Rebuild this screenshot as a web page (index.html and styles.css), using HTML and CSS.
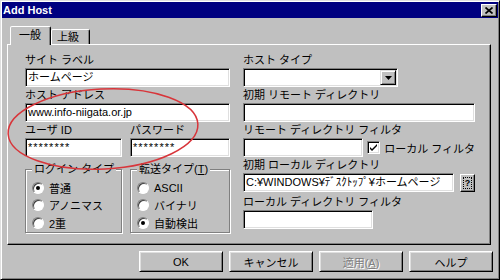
FILE: index.html
```html
<!DOCTYPE html>
<html lang="ja">
<head>
<meta charset="utf-8">
<title>Add Host</title>
<link rel="stylesheet" href="styles.css">
</head>
<body>
<div class="window">
  <div class="titlebar">
    <span class="title">Add Host</span>
    <span class="close"><svg width="8" height="7" viewBox="0 0 8 7"><path d="M0.5 0.5L7.5 6.5M7.5 0.5L0.5 6.5" stroke="#000" stroke-width="1.7" fill="none"/></svg></span>
  </div>
  <div class="tabs">
    <div class="tab active">一般</div>
    <div class="tab">上級</div>
  </div>
  <div class="panel">
    <div class="col left">
      <div class="lbl">サイト ラベル</div>
      <div class="field">ホームページ</div>
      <div class="lbl">ホスト アドレス</div>
      <div class="field">www.info-niigata.or.jp</div>
      <div class="pair">
        <div class="sub">
          <div class="lbl">ユーザ ID</div>
          <div class="field pw">********</div>
        </div>
        <div class="sub">
          <div class="lbl">パスワード</div>
          <div class="field pw">********</div>
        </div>
      </div>
      <div class="pair groups">
        <fieldset class="group">
          <legend>ログイン タイプ</legend>
          <div class="radio"><span class="rb on"></span>普通</div>
          <div class="radio"><span class="rb"></span>アノニマス</div>
          <div class="radio"><span class="rb"></span>2重</div>
        </fieldset>
        <fieldset class="group">
          <legend>転送タイプ(<u>T</u>)</legend>
          <div class="radio"><span class="rb"></span>ASCII</div>
          <div class="radio"><span class="rb"></span>バイナリ</div>
          <div class="radio"><span class="rb on"></span>自動検出</div>
        </fieldset>
      </div>
    </div>
    <div class="col right">
      <div class="lbl">ホスト タイプ</div>
      <div class="select">
        <div class="field sel"></div>
        <span class="drop"><svg width="7" height="4" viewBox="0 0 7 4"><path d="M0 0H7L3.5 4Z" fill="#000"/></svg></span>
      </div>
      <div class="lbl">初期 リモート ディレクトリ</div>
      <div class="field"></div>
      <div class="lbl">リモート ディレクトリ フィルタ</div>
      <div class="row">
        <div class="field w130"></div>
        <span class="check"><svg width="7" height="7" viewBox="0 0 7 7"><path d="M0 3L0 5L2 7L7 2L7 0L2 5Z" fill="#000"/></svg></span>
        <span class="checklbl">ローカル フィルタ</span>
      </div>
      <div class="lbl">初期 ローカル ディレクトリ</div>
      <div class="row">
        <div class="field w211">C:¥WINDOWS¥ﾃﾞｽｸﾄｯﾌﾟ¥ホームページ</div>
        <span class="qbtn"><span class="q">?</span></span>
      </div>
      <div class="lbl last">ローカル ディレクトリ フィルタ</div>
      <div class="field w130"></div>
    </div>
  </div>
  <div class="buttons">
    <button class="btn">OK</button>
    <button class="btn">キャンセル</button>
    <button class="btn disabled">適用(<u>A</u>)</button>
    <button class="btn">ヘルプ</button>
  </div>
  <svg class="annot" width="500" height="280" viewBox="0 0 500 280">
    <ellipse cx="103" cy="129" rx="95" ry="40" transform="rotate(-3 103 129)" fill="none" stroke="#d8353a" stroke-width="1.5"/>
  </svg>
</div>
</body>
</html>
```
FILE: styles.css
```css
* { box-sizing: border-box; }

body {
  margin: 0;
  background: #c0c0c0;
  font-family: "Liberation Sans", "Noto Sans CJK JP", sans-serif;
  font-size: 11px;
  color: #000;
}

.window {
  position: relative;
  width: 500px;
  height: 280px;
  background: #c0c0c0;
  border: 1px solid;
  border-color: #dfdfdf #000 #000 #dfdfdf;
  box-shadow: inset 1px 1px #fff, inset -1px -1px #808080;
  padding: 1px;
  display: flex;
  flex-direction: column;
}

.titlebar {
  height: 16px;
  background: #000080;
  color: #fff;
  display: flex;
  align-items: center;
  justify-content: space-between;
  padding: 0 1px 0 1px;
}

.title {
  font-weight: bold;
  font-size: 11px;
}

.close {
  width: 16px;
  height: 13px;
  background: #c0c0c0;
  border: 1px solid;
  border-color: #fff #000 #000 #fff;
  box-shadow: inset -1px -1px #808080;
  display: flex;
  align-items: center;
  justify-content: center;
}

.tabs {
  display: flex;
  align-items: flex-end;
  height: 18px;
  margin: 8px 0 0 8px;
}

.tab {
  height: 15px;
  padding: 0 6px;
  line-height: 14px;
  font-size: 11px;
  border: 1px solid;
  border-bottom: none;
  border-color: #fff #000 transparent #fff;
  border-radius: 2px 2px 0 0;
  box-shadow: inset -1px 0 #808080;
  background: #c0c0c0;
}

.tab.active {
  position: relative;
  z-index: 1;
  height: 19px;
  margin-bottom: -1px;
  padding: 1px 8px 0;
  line-height: 15px;
  width: 41px;
}

.tab:not(.active) {
  width: 39px;
  padding-left: 5px;
}

.panel {
  margin-left: 5px;
  width: 484px;
  height: 201px;
  border: 1px solid;
  border-color: #fff #000 #000 #fff;
  box-shadow: inset -1px -1px #808080;
  padding: 7px 0 0 17px;
  display: flex;
  gap: 13px;
}

.col {
  display: flex;
  flex-direction: column;
}

.left { width: 205px; }
.right { width: 232px; }

.lbl {
  height: 16px;
  line-height: 16px;
  white-space: nowrap;
}

.lbl.last {
  height: 18px;
  line-height: 20px;
}

.field {
  height: 19px;
  background: #fff;
  border: 1px solid;
  border-color: #808080 #fff #fff #808080;
  box-shadow: inset 1px 1px #000, inset -1px -1px #dfdfdf;
  padding: 0 2px;
  line-height: 17px;
  white-space: nowrap;
  overflow: hidden;
}

.pw { letter-spacing: 1px; }

.pair {
  display: grid;
  grid-template-columns: 97px 100px;
  gap: 8px;
}

.groups { margin-top: 4px; }

.group {
  margin: 0;
  min-width: 0;
  height: 72px;
  padding: 0 4px 1px 6px;
  border: 1px solid #808080;
  box-shadow: inset 1px 1px #fff, 1px 1px #fff;
}

.group legend {
  padding: 0 2px;
  line-height: 16px;
  background: #c0c0c0;
}

.radio {
  display: flex;
  align-items: center;
  gap: 5px;
  height: 17.5px;
  white-space: nowrap;
}

.radio:first-of-type { margin-top: 2px; }

.rb {
  width: 12px;
  height: 12px;
  border-radius: 50%;
  background: #fff;
  border: 1px solid;
  border-color: #808080 #fff #fff #808080;
  box-shadow: inset 1px 1px #404040;
  display: flex;
  align-items: center;
  justify-content: center;
  flex: none;
}

.rb.on::after {
  content: "";
  width: 4px;
  height: 4px;
  border-radius: 50%;
  background: #000;
}

.select {
  display: flex;
  width: 155px;
  position: relative;
}

.field.sel { width: 155px; }

.drop {
  position: absolute;
  right: 2px;
  top: 2px;
  width: 16px;
  height: 15px;
  background: #c0c0c0;
  border: 1px solid;
  border-color: #dfdfdf #000 #000 #dfdfdf;
  box-shadow: inset 1px 1px #fff, inset -1px -1px #808080;
  display: flex;
  align-items: center;
  justify-content: center;
}

.row {
  display: flex;
  align-items: center;
}

.w130 { width: 130px; }
.w211 { width: 211px; }

.check {
  width: 13px;
  height: 13px;
  margin-left: 4px;
  background: #fff;
  border: 1px solid;
  border-color: #808080 #fff #fff #808080;
  box-shadow: inset 1px 1px #000, inset -1px -1px #dfdfdf;
  display: flex;
  align-items: center;
  justify-content: center;
  flex: none;
}

.checklbl {
  margin-left: 4px;
  white-space: nowrap;
}

.qbtn {
  margin-left: 6px;
  width: 15px;
  height: 18px;
  background: #c0c0c0;
  border: 1px solid;
  border-color: #fff #000 #000 #fff;
  box-shadow: inset -1px -1px #808080;
  display: flex;
  align-items: center;
  justify-content: center;
}

.q {
  width: 9px;
  height: 12px;
  border: 1px dotted #000;
  font-size: 9px;
  line-height: 10px;
  text-align: center;
  font-weight: bold;
}

.buttons {
  display: flex;
  justify-content: flex-end;
  gap: 6px;
  margin: 6px 5px 0 0;
}

.btn {
  width: 84px;
  height: 21px;
  padding: 0;
  font-family: inherit;
  font-size: 11px;
  color: #000;
  background: #c0c0c0;
  border: 1px solid;
  border-color: #fff #000 #000 #fff;
  box-shadow: inset 1px 1px #dfdfdf, inset -1px -1px #808080;
}

.btn.disabled {
  color: #808080;
  text-shadow: 1px 1px #fff;
}

.annot {
  position: absolute;
  left: -1px;
  top: -1px;
  pointer-events: none;
}
```
